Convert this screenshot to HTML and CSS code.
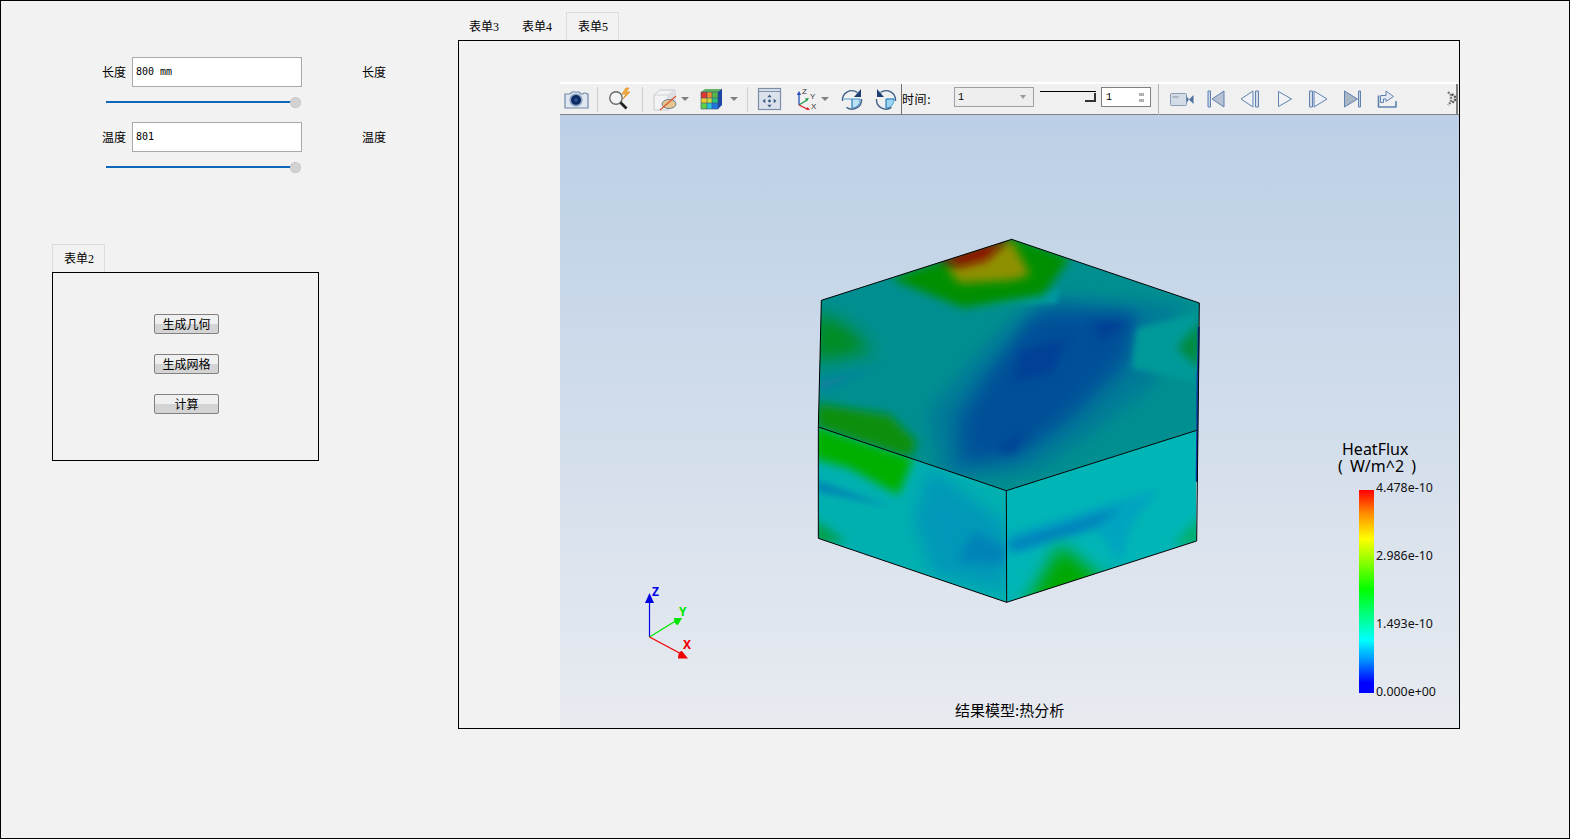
FILE: index.html
```html
<!DOCTYPE html>
<html lang="zh">
<head>
<meta charset="utf-8">
<title>热分析</title>
<link rel="stylesheet" href="styles.css">
</head>
<body>
<div class="app">
  <div class="left">
    <div class="params">
      <div class="field">
        <span class="flabel">长度</span>
        <div class="input">800 mm</div>
        <span class="rlabel">长度</span>
      </div>
      <div class="slider"><div class="track"></div><div class="knob"></div></div>
      <div class="field">
        <span class="flabel">温度</span>
        <div class="input">801</div>
        <span class="rlabel">温度</span>
      </div>
      <div class="slider"><div class="track"></div><div class="knob"></div></div>
    </div>
    <div class="form2">
      <div class="tabs"><div class="tab active">表单<i>2</i></div></div>
      <div class="panel2">
        <button class="btn">生成几何</button>
        <button class="btn">生成网格</button>
        <button class="btn">计算</button>
      </div>
    </div>
  </div>

  <div class="right">
    <div class="tabs">
      <div class="tab">表单<i>3</i></div>
      <div class="tab">表单<i>4</i></div>
      <div class="tab active third">表单<i>5</i></div>
    </div>
    <div class="panel">
      <div class="toolbar">
        <svg class="ic w28 m2" viewBox="0 0 28 24"><path d="M3 7h5l2-2h7l2 2h2l1-1h2l1 1h1v14H3z" fill="#dfe7f1" stroke="#7088a8" stroke-width="1.2"/><circle cx="14" cy="13" r="6.6" fill="#8ea4c2"/><circle cx="14" cy="13" r="5" fill="#0e2a63"/><circle cx="14" cy="13" r="2" fill="#2d4f8f"/></svg>
        <span class="sep m7"></span>
        <svg class="ic w26 m9" viewBox="0 0 26 24"><path d="M19 1l-4 6h4l-3 5 7-7h-4l3-4z" fill="#f4b045" stroke="#d98a1a" stroke-width=".7"/><circle cx="9" cy="11" r="6.200" fill="#f2f4f6" stroke="#6a6a6a" stroke-width="1.400"/><path d="M13.500 15.500l6 6" stroke="#222" stroke-width="2.800"/></svg>
        <span class="sep m9"></span>
        <svg class="ic w28 m7" viewBox="0 0 28 24"><path d="M4 8l6-5h15v13l-7 7H4z" fill="#f2f3f5" stroke="#c4c8ce"/><path d="M4 8h14v15M18 8l7-5" fill="none" stroke="#cdd1d6"/><path d="M18 8l7-5v13l-7 7z" fill="#dcdfe3"/><ellipse cx="19" cy="17" rx="7" ry="4.500" fill="#e6c68c" stroke="#6d7f96"/><path d="M10 23L26 9" stroke="#d9542c" stroke-width="1.100"/></svg>
        <span class="caret m3"></span>
        <svg class="ic w26 m10" viewBox="0 0 26 24"><path d="M2 5l4-3h17l-4 3z" fill="#5fb562"/><path d="M2 5h6v6H2z" fill="#e2392f"/><path d="M8 5h5v6H8z" fill="#ef8f2a"/><path d="M13 5h6v6h-6z" fill="#58b84a"/><path d="M2 11h6v5H2z" fill="#f4c92f"/><path d="M8 11h5v5H8z" fill="#c9dc3a"/><path d="M13 11h6v5h-6z" fill="#2cc07a"/><path d="M2 16h6v6H2z" fill="#5fd04a"/><path d="M8 16h5v6H8z" fill="#28c4d8"/><path d="M13 16h6v6h-6z" fill="#2176e0"/><path d="M19 5l4-3v16l-4 4z" fill="#1b44a8"/><path d="M2 5h17v17H2zM2 11h17M2 16h17M8 5v17M13 5v17M19 5l4-3M19 11l4-3M19 16l4-3" fill="none" stroke="#34527a" stroke-width=".6"/></svg>
        <span class="caret m5"></span>
        <span class="sep m9"></span>
        <svg class="ic w26 m8" viewBox="0 0 26 24"><rect x="2.500" y="1.500" width="22" height="21" fill="#dbe2ec" stroke="#7d8fa8" stroke-width="1.200"/><path d="M3 4.500h21" stroke="#7d8fa8"/><path d="M13.500 7.500l-2.200 2.800h4.400zM13.500 20.500l-2.200-2.800h4.400zM6.500 14l2.800-2.200v4.400zM20.500 14l-2.800-2.200v4.400z" fill="#3f5c82"/><circle cx="13.500" cy="14" r="1.400" fill="#3f5c82"/></svg>
        <svg class="ic w24 m11" viewBox="0 0 24 24"><path d="M6 18V7" stroke="#2250b8" stroke-width="1.300"/><path d="M6 4l-2.200 4h4.400z" fill="#2250b8"/><path d="M6 18l8-5" stroke="#1e9a44" stroke-width="1.300"/><path d="M16 11l-4 .5 1.800 3z" fill="#1e9a44"/><path d="M6 18l8 4" stroke="#d62020" stroke-width="1.300"/><path d="M17 23l-4-.3 1.500-2.800z" fill="#d62020"/><text class="axl" x="9" y="7">Z</text><text class="axl" x="17" y="12">Y</text><text class="axl" x="18" y="22">X</text></svg>
        <span class="caret m4"></span>
        <svg class="ic w26 m10" viewBox="0 0 26 24"><path d="M13 12h8a8 8 0 0 1-8 9z" fill="#bfe1f5" stroke="#2a86c4" stroke-width=".8"/><path d="M5 12h8v9" fill="none" stroke="#2a86c4" stroke-width=".8"/><path d="M3.500 14a9.500 9.500 0 0 1 15-8.500M22.500 12a9.500 9.500 0 0 1-15 8.400" fill="none" stroke="#3f6088" stroke-width="1.400"/><path d="M22 2v8h-7z" fill="#1e3f73"/></svg>
        <svg class="ic w26 m8" viewBox="0 0 26 24"><path d="M13 12h8a8 8 0 0 1-8 9z" fill="#9fd3f2" stroke="#2a86c4" stroke-width=".8"/><path d="M21 12h-8v9" fill="none" stroke="#2a86c4" stroke-width=".8"/><path d="M22.500 14A9.500 9.500 0 0 0 7.500 5.500M3.500 12a9.500 9.500 0 0 0 15 8.400" fill="none" stroke="#3f6088" stroke-width="1.400"/><path d="M4 2v8h7z" fill="#1e3f73"/></svg>
        <span class="vline"></span>
        <span class="time">时间:</span>
        <div class="combo"><span>1</span><b></b></div>
        <div class="tslider"></div>
        <div class="spin"><span>1</span><em></em></div>
        <span class="sep m7 end"></span>
        <div class="player">
          <svg class="ic w26" viewBox="0 0 26 20"><rect x="1.500" y="4.500" width="16" height="12" rx="1" fill="#d3dbe6" stroke="#8a9cb4"/><path d="M3.500 8h6" stroke="#9aa9bd" stroke-width="1.500"/><path d="M20 10.500L24.500 6v9zM17.500 7l2.500 3.500-2.500 3.500z" fill="#4d719e"/></svg>
          <svg class="ic w20 m11" viewBox="0 0 20 20"><path d="M2 2h2.500v16H2z" fill="#c6d3e3" stroke="#5f82b0"/><path d="M18 2v16L6 10z" fill="#b6c2d2" stroke="#5f82b0"/></svg>
          <svg class="ic w20 m14" viewBox="0 0 20 20"><path d="M13 2v16L1 10z" fill="#eef1f5" stroke="#5f82b0"/><path d="M15.500 2h3v16h-3z" fill="#d5dde8" stroke="#5f82b0"/></svg>
          <svg class="ic w16 m17" viewBox="0 0 16 20"><path d="M1.500 2.500v15L14.500 10z" fill="#f0f2f5" stroke="#5f82b0"/></svg>
          <svg class="ic w20 m15" viewBox="0 0 20 20"><path d="M1.500 2h3v16h-3z" fill="#d5dde8" stroke="#5f82b0"/><path d="M6 2v16l13-8z" fill="#eef1f5" stroke="#5f82b0"/></svg>
          <svg class="ic w20 m15" viewBox="0 0 20 20"><path d="M1.500 2v16l13-8z" fill="#aab6c6" stroke="#5f82b0"/><path d="M15.500 2h2v16h-2z" fill="#c6d3e3" stroke="#5f82b0"/></svg>
          <svg class="ic w22 m13" viewBox="0 0 22 20"><path d="M2.500 6.500v11.500h17.500v-6" fill="none" stroke="#5f82b0" stroke-width="1.600" stroke-linejoin="round"/><path d="M4.500 13.500V6.500H10V2l7.500 5.500-7.500 5V10H7.500v3.500z" fill="#e3eaf3" stroke="#5f82b0"/></svg>
          <svg class="grip" viewBox="0 0 9 15"><path d="M1 1l3 3v7l-3 3" fill="none" stroke="#777" stroke-width="2.400" stroke-dasharray="2 1"/><path d="M5 3l3 3v3l-3 3" fill="none" stroke="#555" stroke-width="2.400" stroke-dasharray="2 1"/></svg>
        </div>
      </div>
      <div class="viewport">
        <svg class="scene" viewBox="560 115 899 613">
          <defs>
            <filter id="b6" x="-50%" y="-50%" width="200%" height="200%"><feGaussianBlur stdDeviation="6"/></filter>
            <filter id="b10" x="-50%" y="-50%" width="200%" height="200%"><feGaussianBlur stdDeviation="10"/></filter>
            <filter id="b14" x="-50%" y="-50%" width="200%" height="200%"><feGaussianBlur stdDeviation="14"/></filter>
            <filter id="b26" x="-50%" y="-50%" width="200%" height="200%"><feGaussianBlur stdDeviation="26"/></filter>
            <clipPath id="ct"><path d="M64 226L635 43L1198 234L1190 616L619 797L55 606L60 400z"/></clipPath>
            <clipPath id="cl"><path d="M55 606L619 797L620 1132L55 940z"/></clipPath>
            <clipPath id="cr"><path d="M619 797L1190 616L1189 948L620 1132z"/></clipPath>
          </defs>
          <g transform="translate(800 225) scale(.33333)">
            <g clip-path="url(#ct)">
              <rect x="0" y="0" width="1260" height="820" fill="#008f90"/>
              <g filter="url(#b26)" fill="#007a98"><path d="M740 215L1150 240L1060 480L880 620L700 740L430 770L380 560L520 400L640 280z"/></g>
              <g filter="url(#b26)" fill="#00629a"><path d="M760 240L1010 270L990 420L840 570L660 700L470 730L460 580L570 430L680 320z"/></g>
              <g filter="url(#b26)" fill="#004f98"><path d="M700 270L1010 270L960 400L800 560L660 670L500 700L500 580L590 430z"/></g>
              <g filter="url(#b14)" fill="#003f96"><path d="M660 380L800 340L760 440L640 470z"/><path d="M580 675L680 620L640 685z"/><path d="M880 290L990 290L900 350z"/></g>
              <g filter="url(#b10)" fill="#009a9a"><path d="M1010 310L1190 265L1190 470L995 430z"/></g>
              <g filter="url(#b14)" fill="#008a40"><path d="M1200 290L1130 370L1200 430z"/></g>
              <g filter="url(#b26)" fill="#008c20"><path d="M40 260L140 300L220 380L40 410z"/></g>
              <g filter="url(#b14)" fill="#107ea0"><path d="M50 470L230 425L60 500z"/></g>
              <g filter="url(#b14)" fill="#098f10"><path d="M50 535L270 570L350 650L330 700L50 606z"/></g>
              <g filter="url(#b6)" fill="#0097a0"><path d="M490 245L770 235L780 190L700 200z"/></g>
              <g filter="url(#b14)" fill="#008f00"><path d="M270 160L420 110L640 35L810 100L730 210L490 248z"/></g>
              <g filter="url(#b14)" fill="#8f9000"><path d="M440 130L635 45L690 150L640 165L480 175z"/></g>
              <g filter="url(#b14)" fill="#900800"><path d="M410 105L630 35L560 105L480 125z"/></g>
            </g>
            <g clip-path="url(#cl)">
              <rect x="0" y="560" width="700" height="600" fill="#00b0b0"/>
              <g filter="url(#b26)" fill="#0098b8"><path d="M390 730L620 900L620 1090L400 1050L340 880z"/></g>
              <g filter="url(#b14)" fill="#0084b8"><path d="M520 920L620 965L610 1020L470 1010z"/></g>
              <g filter="url(#b10)" fill="#0088b4"><path d="M50 765L270 845L50 800z"/></g>
              <g filter="url(#b14)" fill="#00b000"><path d="M40 600L340 700L295 810L150 730L40 700z"/></g>
              <g filter="url(#b14)" fill="#00a050"><path d="M40 880L140 950L40 960z"/></g>
            </g>
            <g clip-path="url(#cr)">
              <rect x="600" y="600" width="620" height="560" fill="#00b5b6"/>
              <g filter="url(#b14)" fill="#00a4c0"><path d="M620 930L880 850L1080 790L1000 890L960 1010L880 900L630 990z"/></g>
              <g filter="url(#b14)" fill="#0080bc"><path d="M620 950L880 872L970 845L880 910L640 978z"/></g>
              <g filter="url(#b26)" fill="#00a800"><path d="M660 1170L780 960L930 1080L640 1180z"/></g>
              <g filter="url(#b14)" fill="#00b070"><path d="M1200 870L1120 960L1200 960z"/></g>
            </g>
            <path d="M1196 305L1194 440M1193 440L1190 770" stroke="#0b3fa4" stroke-width="6" fill="none"/>
            <path d="M64 226L635 43L1198 234L1196 440L1190 948L620 1132L55 940L55 606L60 400z M55 606L619 797L1190 616 M619 797L620 1132" fill="none" stroke="#000" stroke-width="3"/>
          </g>
          <g class="triad">
            <path d="M649.500 637V602" stroke="#0000e6"/>
            <path d="M649.500 593l-4.500 10h9z" fill="#0000e6"/>
            <path d="M649.500 637l26-16" stroke="#00e600"/>
            <path d="M682 618L674 618Q674 625 678 625z" fill="#00e600"/>
            <path d="M649.500 637l30 16" stroke="#f00000"/>
            <path d="M688 658.500L678 658.500Q678 651 682 651z" fill="#f00000"/>
            <text class="tz" x="652" y="596">Z</text>
            <text class="ty" x="679" y="616">Y</text>
            <text class="tx" x="683" y="649">X</text>
          </g>
        </svg>
        <div class="legend">
          <div class="ltitle"><div>HeatFlux</div><div class="lunit">( W/m^2 )</div></div>
          <div class="lbody">
            <div class="cbar"></div>
            <div class="lvals"><span>4.478e-10</span><span>2.986e-10</span><span>1.493e-10</span><span>0.000e+00</span></div>
          </div>
        </div>
        <div class="caption">结果模型:热分析</div>
      </div>
    </div>
  </div>
</div>
</body>
</html>
```
FILE: styles.css
```css
* { box-sizing: border-box; }
html, body { margin: 0; padding: 0; }
body { background: #f2f2f2; color: #000; font: 12px/1 "Noto Sans CJK SC", sans-serif; overflow: hidden; }
.app { width: 1570px; height: 839px; border: 1px solid #000; background: #f2f2f2; display: flex; }

.left { width: 457px; flex: none; padding-top: 56px; }
.params { padding-left: 100px; }
.field { display: flex; align-items: center; height: 30px; }
.flabel { width: 31px; padding-left: 1px; }
.input { width: 170px; height: 30px; border: 1px solid #a9a9a9; background: #fff; padding-left: 3px; font: 10px/28px "DejaVu Sans Mono", monospace; }
.rlabel { margin-left: 60px; }
.slider { display: flex; align-items: center; height: 10px; width: 195px; margin: 10px 0 15px 5px; }
.track { flex: 1; height: 2px; background: #0f67b8; }
.knob { width: 11px; height: 11px; margin-left: -2px; border-radius: 50%; background: #d2d2d2; border: 1px dotted #b8b8b8; }

.form2 { margin: 72px 0 0 51px; }
.tabs { display: flex; height: 28px; }
.tab { width: 53px; height: 28px; padding: 8px 0 0 11px; }
.tab i { font: normal 12px/1 "Liberation Serif", serif; }
.tab.active { border: 1px solid #dcdcdc; border-bottom: 0; background: #f2f2f2; padding: 7px 0 0 11px; }
.tab.third { margin-left: 2px; }
.panel2 { width: 267px; height: 189px; border: 1px solid #000; padding: 41px 0 0 101px; display: flex; flex-direction: column; gap: 20px; }
.btn { width: 65px; height: 20px; padding: 0; border: 1px solid #808080; border-radius: 2px; background: linear-gradient(#f0f0f0 50%, #d4d4d4 50%); font: 12px/1 "Noto Sans CJK SC", sans-serif; color: #000; }

.right { padding-top: 11px; width: 1002px; }
.right .tab.active { position: relative; z-index: 1; }
.panel { width: 1002px; height: 689px; border: 1px solid #000; padding: 41px 0 0 101px; }

.toolbar { height: 33px; display: flex; align-items: center; background: #f0f0f0; border-top: 2px solid #fff; border-bottom: 1px solid #808080; }
.ic { display: block; height: 24px; flex: none; overflow: visible; }
.w28 { width: 28px; } .w26 { width: 26px; } .w24 { width: 24px; } .w22 { width: 22px; height: 20px; } .w20 { width: 20px; height: 20px; } .w16 { width: 16px; height: 20px; }
.player .w26 { height: 20px; }
.m2 { margin-left: 2px; } .m3 { margin-left: 3px; } .m4 { margin-left: 4px; } .m5 { margin-left: 5px; } .m7 { margin-left: 7px; } .m8 { margin-left: 8px; } .m9 { margin-left: 9px; } .m10 { margin-left: 10px; } .m11 { margin-left: 11px; } .m13 { margin-left: 13px; } .m14 { margin-left: 14px; } .m15 { margin-left: 15px; } .m17 { margin-left: 17px; }
.sep { width: 1px; height: 25px; background: #cfcfcf; flex: none; }
.caret { width: 0; height: 0; flex: none; border-left: 4px solid transparent; border-right: 4px solid transparent; border-top: 4px solid #808080; }
.axl { font: 8px "Liberation Sans", sans-serif; fill: #333; }
.vline { width: 1px; height: 31px; margin: 0 0 0 2px; background: #707070; flex: none; }
.time { width: 52px; flex: none; letter-spacing: .6px; }
.combo { width: 80px; height: 20px; margin-top: -4px; border: 1px solid #a0a0a0; background: #eeeeee; padding-left: 3px; display: flex; align-items: center; justify-content: space-between; font: 10px "Liberation Mono", monospace; flex: none; }
.combo b { width: 0; height: 0; margin-right: 7px; border-left: 3px solid transparent; border-right: 3px solid transparent; border-top: 4px solid #999; }
.tslider { width: 56px; height: 8px; margin: -8px 0 0 6px; border-top: 1px solid #000; position: relative; flex: none; }
.tslider::after { content: ""; position: absolute; right: 0; top: 1px; width: 9px; height: 7px; border-right: 2px solid #333; border-bottom: 2px solid #333; }
.spin { width: 50px; height: 20px; margin: -4px 0 0 5px; border: 1px solid #808080; background: #fff; padding-left: 4px; display: flex; align-items: center; justify-content: space-between; font: 10px "Liberation Mono", monospace; flex: none; }
.spin em { width: 5px; height: 9px; margin-right: 6px; background: linear-gradient(#b0b0b0 30%, transparent 30%, transparent 70%, #b0b0b0 70%); }
.end { height: 31px; background: #b5b5b5; }
.player { margin: 0 1px -1px 7px; padding-left: 3px; height: 32px; flex: 1; display: flex; align-items: center; border-right: 2px solid #808080; border-bottom: 2px solid #808080; background: #f0f0f0; }
.grip { width: 9px; height: 15px; flex: none; margin-left: auto; }

.viewport { position: relative; height: 613px; background: linear-gradient(#bbcfe6, #e8ebf0); overflow: hidden; }
.scene { display: block; width: 899px; height: 613px; }
.triad path { stroke-width: 1.2; }
.triad text { font: bold 12px "Noto Sans", sans-serif; }
.tz { fill: #0000e6; } .ty { fill: #00e600; } .tx { fill: #f00000; }

.legend { position: absolute; left: 770px; top: 326px; width: 130px; }
.ltitle { font: 16px/17px "Noto Sans", sans-serif; padding-left: 12px; height: 49px; }
.lunit { margin-left: -4px; word-spacing: 3px; }
.lbody { display: flex; margin-left: 29px; }
.cbar { width: 15px; height: 203px; background: linear-gradient(#ff0000, #ff9000 12%, #ffff00 24%, #00ff00 49%, #00ffff 74%, #0090ff 84%, #0000ff 95%); }
.lvals { margin: -9px 0 0 2px; height: 218px; display: flex; flex-direction: column; justify-content: space-between; font: 12.4px/14px "Noto Sans", sans-serif; color: #111; }
.caption { position: absolute; left: 395px; top: 586px; font: 15px/18px "Noto Sans CJK SC", sans-serif; }
```
